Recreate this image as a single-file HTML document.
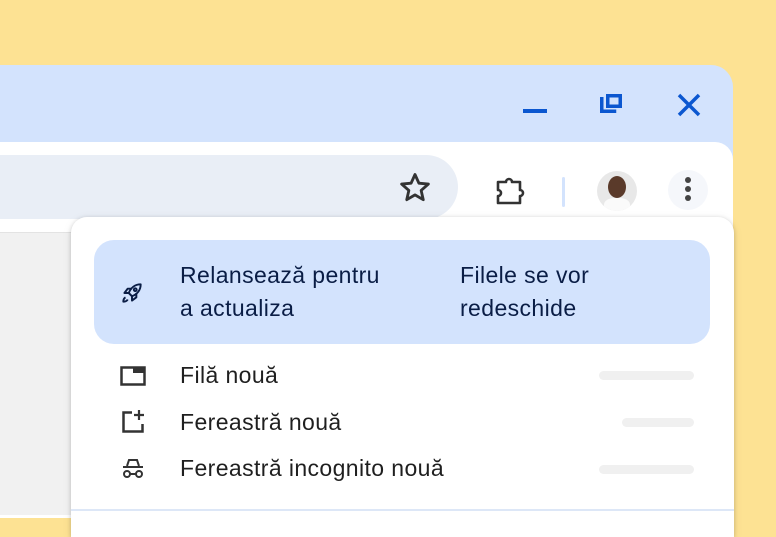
<!DOCTYPE html>
<html><head><style>
*{margin:0;padding:0;box-sizing:border-box}
html,body{width:776px;height:518px}
body{overflow:hidden;background:#fde293;position:relative;font-family:"Liberation Sans",Arial,sans-serif}
.win{position:absolute;left:0;top:65px;width:733px;height:453px;background:#d3e3fd;border-radius:0 22px 0 0;overflow:hidden}
.tool{position:absolute;left:0;top:77px;width:733px;height:400px;background:#fff;border-radius:0 18px 0 0}
.omni{position:absolute;left:-30px;top:13px;width:488px;height:64px;background:#e9eef6;border-radius:32px}
.content{position:absolute;left:0;top:90px;width:733px;height:283px;background:#f1f1f1;border-top:1px solid #e3e3e3;border-radius:0 0 14px 0}
.menu{position:absolute;left:71px;top:217px;width:663px;height:320px;background:#fff;border-radius:16px 16px 0 0;box-shadow:0 1px 4px rgba(0,0,0,.18),0 2px 10px rgba(0,0,0,.08)}
.hl{position:absolute;left:23px;top:23px;width:616px;height:104px;background:#d3e3fd;border-radius:20px}
.t{position:absolute;font-size:23px;line-height:33px;color:#1f1f1f;letter-spacing:.4px;white-space:nowrap}
.hl .t{color:#0a1d45}
.bar{position:absolute;height:9px;background:#f0f0f0;border-radius:5px}
.div{position:absolute;left:0;top:292px;width:663px;height:2px;background:#dde7f7}
</style></head><body>
<div class="win">
  <svg style="position:absolute;left:520px;top:26px" width="200" height="30" viewBox="0 0 200 30">
    <rect x="3" y="18" width="24" height="4" fill="#0b57d0"/>
    <rect x="87.75" y="4.75" width="12.5" height="10.5" fill="none" stroke="#0b57d0" stroke-width="3.5"/>
    <path d="M81.75 6v14.25h14.5" fill="none" stroke="#0b57d0" stroke-width="3.5"/>
    <path d="M159 4l20 20M179 4l-20 20" stroke="#0b57d0" stroke-width="3.5"/>
  </svg>
  <div class="tool">
    <div class="omni"></div>
    <div class="content"></div>
    <svg style="position:absolute;left:397px;top:28px" width="36" height="36" viewBox="0 0 24 24"><path d="M12 3l2.6 5.8 6.3.6-4.8 4.2 1.4 6.2L12 16.6l-5.5 3.2 1.4-6.2-4.8-4.2 6.3-.6z" fill="none" stroke="#333" stroke-width="1.9" stroke-linejoin="round"/></svg>
    <svg style="position:absolute;left:495px;top:33px" width="34" height="32" viewBox="0 0 34 32"><path d="M3 7h8a3 3 0 0 1 6 0h8v8a3 3 0 0 1 0 6v7H3v-7a3 3 0 0 0 0-6z" fill="none" stroke="#333" stroke-width="2.6" stroke-linejoin="round"/></svg>
    <div style="position:absolute;left:562px;top:35px;width:3px;height:30px;background:#d3e3fd;border-radius:2px"></div>
    <div style="position:absolute;left:597px;top:29px;width:40px;height:40px;border-radius:50%;background:#e8e8e8;overflow:hidden">
      <div style="position:absolute;left:11px;top:5px;width:18px;height:22px;border-radius:50%;background:#5a3a2a"></div>
      <div style="position:absolute;left:7px;top:27px;width:26px;height:16px;border-radius:40% 40% 0 0;background:#fafafa"></div>
    </div>
    <div style="position:absolute;left:668px;top:28px;width:40px;height:40px;border-radius:50%;background:#f5f7fb"></div>
    <div style="position:absolute;left:685px;top:35px;width:6px;height:6px;border-radius:50%;background:#444;box-shadow:0 9px 0 #444,0 18px 0 #444"></div>
  </div>
</div>
<div class="menu">
  <div class="hl">
    <svg style="position:absolute;left:25px;top:40px" width="26" height="26" viewBox="0 0 24 24" fill="none" stroke="#0a1d45" stroke-width="1.8" stroke-linejoin="round"><path d="M20 4c-5 0-9 3-11 8l3 3c5-2 8-6 8-11z"/><path d="M9 12l-4 0 3-4 4 0M12 15l0 4 4-3 0-4"/><circle cx="15" cy="9" r="1.3"/><path d="M6 16c-2 1-2 3-2 4 1 0 3 0 4-2"/></svg>
    <div class="t" style="left:86px;top:0px;padding-top:19px">Relansează pentru<br>a actualiza</div>
    <div class="t" style="left:366px;top:0px;padding-top:19px">Filele se vor<br>redeschide</div>
  </div>
  <svg style="position:absolute;left:49px;top:148px" width="26" height="22" viewBox="0 0 26 22"><rect x="1.5" y="2.5" width="23" height="17" fill="none" stroke="#333" stroke-width="2.5"/><rect x="13" y="2" width="12" height="6" fill="#333"/></svg>
  <div class="t" style="left:109px;top:142px">Filă nouă</div>
  <div class="bar" style="left:528px;top:154px;width:95px"></div>
  <svg style="position:absolute;left:49px;top:192px" width="26" height="26" viewBox="0 0 26 26" fill="none" stroke="#333" stroke-width="2.5"><path d="M12 3.5H3.5v19h19V15"/><path d="M19 1v10M14 6h10" stroke-width="2.2"/></svg>
  <div class="t" style="left:109px;top:189px">Fereastră nouă</div>
  <div class="bar" style="left:551px;top:201px;width:72px"></div>
  <svg style="position:absolute;left:50px;top:240px" width="24" height="22" viewBox="0 0 24 22" fill="none" stroke="#333" stroke-width="2"><path d="M6 9l2-6h8l2 6M2 10h20"/><circle cx="6" cy="17" r="3"/><circle cx="18" cy="17" r="3"/><path d="M9 17h6"/></svg>
  <div class="t" style="left:109px;top:235px">Fereastră incognito nouă</div>
  <div class="bar" style="left:528px;top:248px;width:95px"></div>
  <div class="div"></div>
</div>
</body></html>
